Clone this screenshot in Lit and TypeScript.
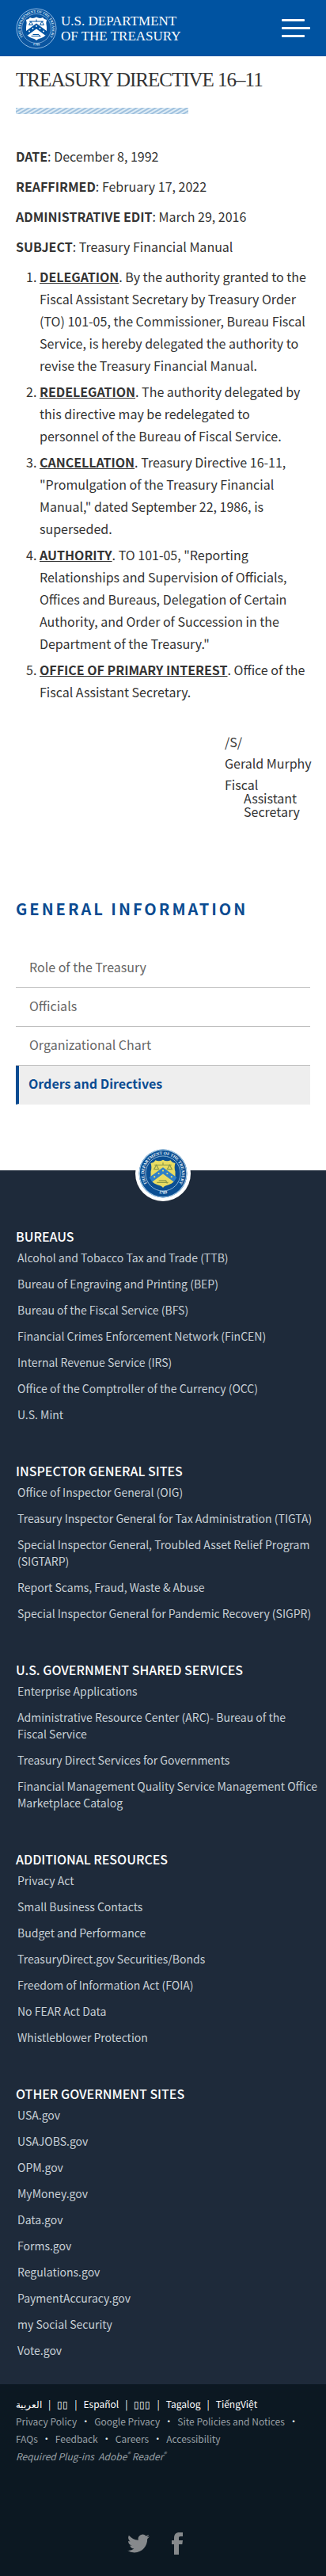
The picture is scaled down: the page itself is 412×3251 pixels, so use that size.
import { LitElement, html, svg, css } from "lit";
import { customElement, property } from "lit/decorators.js";

@customElement("treasury-seal")
class TreasurySeal extends LitElement {
  @property() tone = "light";

  static styles = css`
    :host { display: block; --disc: #0a55a0; --ring: #8fbbe4; --letter: #d8e9f8; --shield: #fff; --mark: #0053a1; --band: #0053a1; }
    :host([tone="color"]) { --disc: #0b4f93; --ring: #9cc3e0; --letter: #eef6fb; --shield: #e9dc62; --mark: #8c9a4a; --band: #2f80c8; }
    svg { display: block; width: 100%; height: 100%; }
    .disc { fill: var(--disc); }
    .ring { fill: none; stroke: var(--ring); }
    .letters { fill: var(--letter); font: bold 9px "Liberation Serif", serif; }
    .shield { fill: var(--shield); }
    .mark { fill: none; stroke: var(--mark); }
    .band { fill: none; stroke: var(--band); }
    .star { fill: var(--shield); }
  `;

  render() {
    return html`<svg viewBox="0 0 104 104" role="img" aria-label="Seal of the Department of the Treasury">
      <defs>
        <path id="over" d="M20.500 76.500A40 40 0 1 1 83.500 76.500" />
        <path id="under" d="M34 91A43 43 0 0 0 70 91" />
      </defs>
      <circle class="disc" cx="52" cy="52" r="51" />
      <circle class="ring" cx="52" cy="52" r="50" stroke-width="2" />
      <circle class="ring" cx="52" cy="52" r="37" stroke-width="1.500" />
      <text class="letters"><textPath href="#over" startOffset="50%" text-anchor="middle">THE DEPARTMENT OF THE TREASURY</textPath></text>
      <text class="letters"><textPath href="#under" startOffset="50%" text-anchor="middle">1789</textPath></text>
      <path class="shield" d="M26 30Q32 30 36 24Q44 28 52 23Q60 28 68 24Q72 30 78 30Q75 38 78 48V61Q77 72 64 76Q55 78 52 82Q49 78 40 76Q27 72 26 61V48Q29 38 26 30Z" />
      <path class="mark" stroke-width="2" d="M34 34H70M52 29V35M38 34L33 43H43ZM66 34L61 43H71ZM39 71H63M43 67H58L61 73" />
      <path class="band" stroke-width="11" d="M26 65L52 46L78 65" />
      ${[[34, 59], [43, 52], [52, 46], [61, 52], [70, 59]].map(
        ([x, y]) => svg`<circle class="star" cx=${x} cy=${y} r="1.800" />`
      )}
    </svg>`;
  }
}

const directives = [
  ["DELEGATION", "By the authority granted to the Fiscal Assistant Secretary by Treasury Order (TO) 101-05, the Commissioner, Bureau Fiscal Service, is hereby delegated the authority to revise the Treasury Financial Manual."],
  ["REDELEGATION", "The authority delegated by this directive may be redelegated to personnel of the Bureau of Fiscal Service."],
  ["CANCELLATION", "Treasury Directive 16-11, \"Promulgation of the Treasury Financial Manual,\" dated September 22, 1986, is superseded."],
  ["AUTHORITY", "TO 101-05, \"Reporting Relationships and Supervision of Officials, Offices and Bureaus, Delegation of Certain Authority, and Order of Succession in the Department of the Treasury.\""],
  ["OFFICE OF PRIMARY INTEREST", "Office of the Fiscal Assistant Secretary."],
];

const facts = [
  ["DATE", "December 8, 1992"],
  ["REAFFIRMED", "February 17, 2022"],
  ["ADMINISTRATIVE EDIT", "March 29, 2016"],
  ["SUBJECT", "Treasury Financial Manual"],
];

const sections: [string, string[]][] = [
  ["BUREAUS", [
    "Alcohol and Tobacco Tax and Trade (TTB)",
    "Bureau of Engraving and Printing (BEP)",
    "Bureau of the Fiscal Service (BFS)",
    "Financial Crimes Enforcement Network (FinCEN)",
    "Internal Revenue Service (IRS)",
    "Office of the Comptroller of the Currency (OCC)",
    "U.S. Mint",
  ]],
  ["INSPECTOR GENERAL SITES", [
    "Office of Inspector General (OIG)",
    "Treasury Inspector General for Tax Administration (TIGTA)",
    "Special Inspector General, Troubled Asset Relief Program (SIGTARP)",
    "Report Scams, Fraud, Waste & Abuse",
    "Special Inspector General for Pandemic Recovery (SIGPR)",
  ]],
  ["U.S. GOVERNMENT SHARED SERVICES", [
    "Enterprise Applications",
    "Administrative Resource Center (ARC)- Bureau of the Fiscal\u00a0Service",
    "Treasury Direct Services for Governments",
    "Financial Management Quality Service Management Office Marketplace Catalog",
  ]],
  ["ADDITIONAL RESOURCES", [
    "Privacy Act",
    "Small Business Contacts",
    "Budget and Performance",
    "TreasuryDirect.gov Securities/Bonds",
    "Freedom of Information Act (FOIA)",
    "No FEAR Act Data",
    "Whistleblower Protection",
  ]],
  ["OTHER GOVERNMENT SITES", [
    "USA.gov",
    "USAJOBS.gov",
    "OPM.gov",
    "MyMoney.gov",
    "Data.gov",
    "Forms.gov",
    "Regulations.gov",
    "PaymentAccuracy.gov",
    "my Social Security",
    "Vote.gov",
  ]],
];

const languages = ["العربية", "▯▯", "Español", "▯▯▯", "Tagalog", "TiếngViệt"];
const policies = ["Privacy Policy", "Google Privacy", "Site Policies and Notices", "FAQs", "Feedback", "Careers", "Accessibility"];

@customElement("app-root")
class AppRoot extends LitElement {
  static styles = css`
    :host {
      display: block;
      background: #fff;
      color: #333;
      font: 16px/28px "Noto Sans CJK SC", "Open Sans", sans-serif;
    }
    h1, h2, h3, p, ul, ol { margin: 0; padding: 0; }
    ul { list-style: none; }
    a { color: inherit; text-decoration: none; }

    .top {
      display: flex;
      align-items: center;
      justify-content: space-between;
      height: 71px;
      padding: 0 20px;
      background: #0053a1;
    }
    .brand { display: flex; align-items: center; gap: 5px; color: #fff; font: 17px/19px "Liberation Serif", serif; }
    .brand-seal { width: 52px; height: 52px; }
    .menu { display: grid; gap: 7px; padding: 0; border: 0; background: none; cursor: pointer; }
    .bar { width: 29px; height: 3px; border-radius: 1px; background: #fff; }
    .bar.long { width: 36px; }

    .content { padding: 14px 20px 0; }
    .title { font: 25px/32px "Liberation Serif", serif; color: #333; letter-spacing: -1px; }
    .stripes {
      width: 218px;
      height: 8px;
      margin: 19px 0 39px;
      background: repeating-linear-gradient(150deg, #9fc1de 0 1px, #e0edf6 2px 3px, #9fc1de 4px);
    }
    .fact { margin-bottom: 10px; }
    .directives { display: grid; gap: 5px; padding-left: 30px; }
    .term { font-weight: bold; text-decoration: underline; }
    .signature { display: grid; gap: 10px; width: 108px; margin: 41px 0 0 auto; line-height: 17px; }
    .signer { white-space: nowrap; }
    .hang { padding-left: 24px; text-indent: -24px; }

    .side { padding: 100px 20px 83px; }
    .side-title { margin-bottom: 37px; color: #0a4b91; font-size: 20px; line-height: 28px; letter-spacing: 3px; }
    .side-link { display: block; padding: 10px 17px 14px; border-bottom: 1px solid #bfbfbf; color: #666; line-height: 24px; }
    .side-link.active { padding-left: 12px; border-left: 4px solid #0a4b91; border-bottom-color: #eee; background: #eee; color: #0a4b91; font-weight: bold; }

    .sites { position: relative; display: grid; gap: 48px; padding: 71px 20px 32px; background: #1e2a3a; }
    .medallion { position: absolute; top: -31px; left: 50%; box-sizing: border-box; width: 70px; height: 70px; margin-left: -35px; padding: 4px; border-radius: 50%; background: #fff; }
    .sites-title { margin-bottom: 5px; color: #fff; font-size: 16px; line-height: 24px; font-weight: 500; }
    .sites-list { display: grid; gap: 12px; margin-right: -10px; padding-left: 2px; color: #c8d0d6; font-size: 14px; line-height: 21px; }

    .legal { padding: 14px 20px 27px; background: #0c1822; color: #98a0a6; font-size: 12px; line-height: 22px; }
    .row { display: flex; flex-wrap: wrap; }
    .languages { color: #fff; }
    .languages li + li::before { content: "|"; margin: 0 8px; }
    .policies li:not(:last-child)::after { content: "•"; margin: 0 5px; color: #dde3e6; }
    .plugins { font-style: italic; }
    .mark { font-size: 8px; line-height: 8px; }
    .social { display: flex; justify-content: center; gap: 28px; margin-top: 85px; padding-right: 20px; color: #86898c; }
    .social-icon { display: block; width: 28px; height: 28px; fill: currentColor; }
    .social-icon.slim { width: 14px; }
  `;

  render() {
    return html`
      <header class="top">
        <a class="brand" href="#">
          <treasury-seal class="brand-seal"></treasury-seal>
          <span>U.S. DEPARTMENT<br />OF THE TREASURY</span>
        </a>
        <button class="menu" type="button" aria-label="Menu">
          <span class="bar"></span><span class="bar long"></span><span class="bar"></span>
        </button>
      </header>

      <main class="content">
        <h1 class="title">TREASURY DIRECTIVE 16–11</h1>
        <div class="stripes"></div>
        ${facts.map(([name, value]) => html`<p class="fact"><b>${name}</b>: ${value}</p>`)}
        <ol class="directives">
          ${directives.map(([term, text]) => html`<li><span class="term">${term}</span>. ${text}</li>`)}
        </ol>
        <div class="signature">
          <p>/S/</p>
          <p class="signer">Gerald Murphy</p>
          <p class="hang">Fiscal Assistant Secretary</p>
        </div>
      </main>

      <nav class="side" aria-label="General information">
        <h2 class="side-title">GENERAL INFORMATION</h2>
        <a class="side-link" href="#">Role of the Treasury</a>
        <a class="side-link" href="#">Officials</a>
        <a class="side-link" href="#">Organizational Chart</a>
        <a class="side-link active" href="#" aria-current="page">Orders and Directives</a>
      </nav>

      <footer>
        <div class="sites">
          <div class="medallion"><treasury-seal tone="color"></treasury-seal></div>
          ${sections.map(([title, links]) => html`
            <section>
              <h3 class="sites-title">${title}</h3>
              <ul class="sites-list">
                ${links.map((link) => html`<li><a href="#">${link}</a></li>`)}
              </ul>
            </section>
          `)}
        </div>
        <div class="legal">
          <ul class="row languages">${languages.map((name) => html`<li><a href="#">${name}</a></li>`)}</ul>
          <ul class="row policies">${policies.map((name) => html`<li><a href="#">${name}</a></li>`)}</ul>
          <p class="plugins">Required Plug-ins &nbsp;<a href="#">Adobe<sup class="mark">®</sup> Reader<sup class="mark">®</sup></a></p>
          <div class="social">
            <a href="#" aria-label="Twitter">
              <svg class="social-icon" viewBox="0 0 24 24"><path d="M23.950 4.570a10 10 0 0 1-2.820.780 4.960 4.960 0 0 0 2.160-2.720c-.950.550-2 .950-3.120 1.180a4.920 4.920 0 0 0-8.380 4.480C7.690 8.090 4.070 6.130 1.640 3.160a4.820 4.820 0 0 0-.670 2.480c0 1.710.870 3.210 2.190 4.100a4.900 4.900 0 0 1-2.230-.620v.060a4.920 4.920 0 0 0 3.950 4.830 5 5 0 0 1-2.210.080 4.940 4.940 0 0 0 4.600 3.420A9.870 9.870 0 0 1 0 19.540a13.990 13.990 0 0 0 7.550 2.210c9.050 0 14-7.500 14-13.980 0-.210 0-.420-.020-.630a9.940 9.940 0 0 0 2.460-2.550z" /></svg>
            </a>
            <a href="#" aria-label="Facebook">
              <svg class="social-icon slim" viewBox="0 0 14 28"><path d="M3 28V15H0V10H3V7C3 2.500 5.500 0 9.500 0H14V5H11C9.500 5 9 5.800 9 7V10H14L13.300 15H9V28Z" /></svg>
            </a>
          </div>
        </div>
      </footer>
    `;
  }
}
